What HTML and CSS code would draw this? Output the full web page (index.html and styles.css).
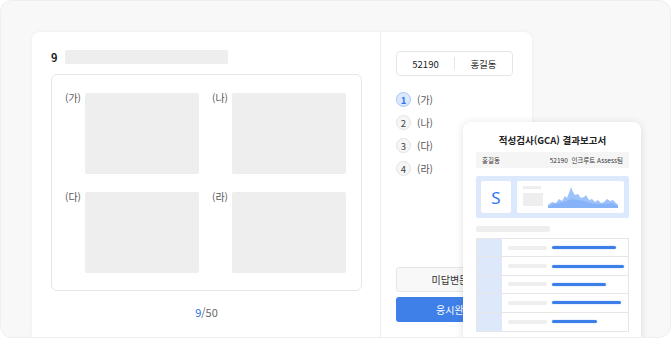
FILE: index.html
```html
<!DOCTYPE html>
<html lang="ko">
<head>
  <meta charset="UTF-8" />
  <title>적성검사 응시</title>
  <link rel="stylesheet" href="styles.css">
</head>
<body>
  <div class="frame">
    <div class="card">
      <!-- Question area -->
      <div class="question">
        <div class="q-head">
          <span class="q-num">9</span>
          <span class="q-title"></span>
        </div>
        <div class="q-box">
          <div class="choice"><span class="choice-label">(가)</span><div class="choice-img"></div></div>
          <div class="choice"><span class="choice-label">(나)</span><div class="choice-img"></div></div>
          <div class="choice"><span class="choice-label">(다)</span><div class="choice-img"></div></div>
          <div class="choice"><span class="choice-label">(라)</span><div class="choice-img"></div></div>
        </div>
        <p class="pager"><span class="current">9</span>/50</p>
      </div>

      <!-- Answer panel -->
      <div class="side">
        <div class="user-box">
          <span>52190</span>
          <span>홍길동</span>
        </div>
        <ul class="answers">
          <li class="selected"><span class="circle">1</span>(가)</li>
          <li><span class="circle">2</span>(나)</li>
          <li><span class="circle">3</span>(다)</li>
          <li><span class="circle">4</span>(라)</li>
        </ul>
        <div class="side-buttons">
          <button class="btn-light">미답변문제</button>
          <button class="btn-blue">응시완료</button>
        </div>
      </div>
    </div>

    <!-- Report preview -->
    <div class="report">
      <h3>적성검사(GCA) 결과보고서</h3>
      <div class="report-info">
        <span>홍길동</span>
        <span>52190 &nbsp;인크루트 Assess팀</span>
      </div>
      <div class="report-summary">
        <div class="grade">S</div>
        <div class="chart-box">
          <div class="chart-legend">
            <span class="legend-line"></span>
            <span class="legend-block"></span>
          </div>
          <svg class="chart" width="70" height="24" viewBox="0 0 70 24">
            <path d="M0 24 L0 21 L4 18 L8 19 L11 15 L14 17 L17 12 L19 14 L21 9 L23 3 L25 8 L27 11 L30 10 L33 14 L36 13 L38 11 L41 16 L44 15 L47 18 L50 16 L53 19 L56 18 L59 15 L62 17 L65 16 L68 19 L70 21 L70 24 Z" fill="#9ec2fb"/>
            <path d="M0 24 L0 22 L6 20 L12 19 L18 17 L24 15 L30 16 L36 17 L42 19 L48 20 L56 20 L64 19 L70 22 L70 24 Z" fill="#86b2f7"/>
          </svg>
        </div>
      </div>
      <div class="report-subtitle"></div>
      <div class="report-table">
        <div class="row"><span class="label-line"></span><span class="bar" style="width: 64px"></span></div>
        <div class="row"><span class="label-line"></span><span class="bar" style="width: 72px"></span></div>
        <div class="row"><span class="label-line"></span><span class="bar" style="width: 54px"></span></div>
        <div class="row"><span class="label-line"></span><span class="bar" style="width: 69px"></span></div>
        <div class="row"><span class="label-line"></span><span class="bar" style="width: 45px"></span></div>
      </div>
    </div>
  </div>
</body>
</html>
```

FILE: styles.css
```css
* {
  box-sizing: border-box;
}
body {
  margin: 0;
  background: #fff;
  font-family: "Noto Sans CJK KR", "Noto Sans", sans-serif;
  color: #333;
}
.frame {
  position: relative;
  width: 671px;
  height: 338px;
  background: #f8f8f8;
  border: 1px solid #efefef;
  border-radius: 12px;
  overflow: hidden;
  padding: 31px 0 0 31px;
}
.card {
  display: flex;
  width: 500px;
  height: 310px;
  background: #fff;
  border-radius: 8px;
  box-shadow: 0 0 4px rgba(0, 0, 0, 0.05);
}

/* question */
.question {
  width: 349px;
  padding: 18px 0 0 19px;
  border-right: 1px solid #eeeeee;
}
.q-head {
  display: flex;
  align-items: center;
  gap: 7px;
  height: 14px;
}
.q-num {
  font-size: 11px;
  font-weight: bold;
  color: #222;
  line-height: 14px;
}
.q-title {
  width: 163px;
  height: 14px;
  background: #eeeeee;
  border-radius: 2px;
}
.q-box {
  margin-top: 10px;
  width: 311px;
  height: 217px;
  border: 1px solid #e6e6e6;
  border-radius: 6px;
  padding: 18px 15px 17px 13px;
  display: grid;
  grid-template-columns: 134px 134px;
  grid-template-rows: 81px 81px;
  column-gap: 13px;
  row-gap: 18px;
}
.choice {
  display: flex;
  gap: 4px;
}
.choice-label {
  width: 16px;
  font-size: 10px;
  color: #555;
  line-height: 12px;
  margin-top: -1px;
  white-space: nowrap;
}
.choice-img {
  width: 114px;
  height: 81px;
  background: #eeeeee;
  border-radius: 2px;
}
.pager {
  margin: 14px 0 0;
  width: 311px;
  text-align: center;
  font-size: 11px;
  color: #666;
  line-height: 14px;
}
.pager .current {
  color: #2f76f0;
}

/* side panel */
.side {
  flex: 1;
  display: flex;
  flex-direction: column;
  padding: 19px 19px 20px 15px;
}
.user-box {
  display: flex;
  height: 25px;
  border: 1px solid #e6e6e6;
  border-radius: 4px;
  font-size: 9.5px;
  color: #222;
}
.user-box span {
  flex: 1;
  display: flex;
  align-items: center;
  justify-content: center;
}
.user-box span + span {
  border-left: 1px solid #e6e6e6;
  margin: 5px 0;
}
.answers {
  list-style: none;
  margin: 16px 0 0;
  padding: 0;
}
.answers li {
  display: flex;
  align-items: center;
  gap: 6px;
  height: 15px;
  margin-bottom: 8px;
  font-size: 10px;
  color: #555;
}
.circle {
  width: 15px;
  height: 15px;
  border-radius: 50%;
  border: 1px solid #e3e3e3;
  background: #f6f6f6;
  display: flex;
  align-items: center;
  justify-content: center;
  font-size: 9.5px;
  color: #444;
}
.answers li.selected .circle {
  background: #dce9fd;
  border-color: #a9c8f8;
  color: #2f76f0;
  font-weight: bold;
}
.side-buttons {
  margin-top: auto;
  display: flex;
  flex-direction: column;
  gap: 5px;
}
.side-buttons button {
  height: 25px;
  border-radius: 3px;
  font-family: inherit;
  font-size: 10px;
}
.btn-light {
  background: #f8f8f8;
  border: 1px solid #e6e6e6;
  color: #333;
}
.btn-blue {
  background: #3f80e8;
  border: none;
  color: #fff;
}

/* report preview */
.report {
  position: absolute;
  left: 462px;
  top: 121px;
  width: 178px;
  height: 230px;
  background: #fff;
  border-radius: 8px;
  box-shadow: 0 1px 8px rgba(0, 0, 0, 0.12);
  padding: 11px 12px 0 13px;
}
.report h3 {
  margin: 0;
  text-align: center;
  font-size: 9.5px;
  font-weight: bold;
  color: #222;
  line-height: 14px;
}
.report-info {
  margin-top: 5px;
  height: 16px;
  background: #f5f5f5;
  display: flex;
  justify-content: space-between;
  align-items: center;
  padding: 0 6px;
  font-size: 6.5px;
  color: #333;
}
.report-summary {
  margin-top: 8px;
  height: 42px;
  background: #dce9fd;
  border-radius: 2px;
  padding: 5px;
  display: flex;
  gap: 6px;
}
.grade {
  width: 30px;
  background: #fff;
  border-radius: 2px;
  display: flex;
  align-items: center;
  justify-content: center;
  font-size: 17px;
  color: #2f76f0;
  font-family: "Noto Sans", sans-serif;
}
.chart-box {
  flex: 1;
  background: #fff;
  border-radius: 2px;
  display: flex;
  align-items: flex-end;
  padding: 5px 6px 5px 6px;
  gap: 5px;
}
.chart-legend {
  display: flex;
  flex-direction: column;
  gap: 4px;
  align-self: flex-start;
}
.legend-line {
  width: 18px;
  height: 3px;
  background: #eeeeee;
}
.legend-block {
  width: 20px;
  height: 13px;
  background: #eeeeee;
}
.chart {
  display: block;
}
.report-subtitle {
  margin-top: 8px;
  width: 74px;
  height: 6px;
  background: #eeeeee;
  border-radius: 2px;
}
.report-table {
  margin-top: 6px;
  border: 1px solid #e6e6e6;
  background: linear-gradient(to right, #dde9fb 25px, #fff 25px);
}
.report-table .row {
  display: flex;
  align-items: center;
  height: 18.4px;
  padding-left: 31px;
  border-bottom: 1px solid #e6e6e6;
}
.report-table .row:last-child {
  border-bottom: none;
}
.label-line {
  width: 39px;
  height: 4px;
  background: #eeeeee;
  border-radius: 2px;
}
.bar {
  margin-left: 5px;
  height: 3px;
  background: #3d7fe8;
  border-radius: 2px;
  box-shadow: 0 0 2px rgba(61, 127, 232, 0.35);
}
```
